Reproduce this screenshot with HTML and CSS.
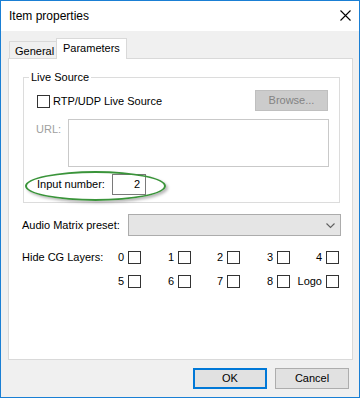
FILE: index.html
```html
<!DOCTYPE html>
<html>
<head>
<meta charset="utf-8">
<link rel="stylesheet" href="styles.css">
</head>
<body>
<div class="window">
  <div class="titlebar">
    <span class="title">Item properties</span>
    <svg class="close" width="11" height="11" viewBox="0 0 11 11"><path d="M0.5 0.5 L10.5 10.5 M10.5 0.5 L0.5 10.5" stroke="#000" stroke-width="1.1" fill="none"/></svg>
  </div>
  <div class="content">
    <div class="tabs">
      <div class="tab">General</div>
      <div class="tab active">Parameters</div>
    </div>
    <div class="panel">
      <div class="group">
        <div class="legend">Live Source</div>
        <div class="row row-live">
          <div class="check-wrap"><span class="checkbox"></span><span class="check-label">RTP/UDP Live Source</span></div>
          <div class="btn disabled">Browse...</div>
        </div>
        <div class="row row-url">
          <span class="url-label">URL:</span>
          <div class="textarea"></div>
        </div>
        <div class="row row-input">
          <span class="input-label">Input number:</span>
          <div class="numbox">2</div>
          <div class="highlight"></div>
        </div>
      </div>
      <div class="row row-audio">
        <span class="audio-label">Audio Matrix preset:</span>
        <div class="combo">
          <svg width="9" height="6" viewBox="0 0 9 6"><polyline points="0.5,0.5 4.5,4.5 8.5,0.5" stroke="#606060" stroke-width="1.1" fill="none"/></svg>
        </div>
      </div>
      <div class="row row-layers">
        <span class="layers-label">Hide CG Layers:</span>
        <div class="layer-grid">
          <div class="layer"><span>0</span><span class="checkbox"></span></div>
          <div class="layer"><span>1</span><span class="checkbox"></span></div>
          <div class="layer"><span>2</span><span class="checkbox"></span></div>
          <div class="layer"><span>3</span><span class="checkbox"></span></div>
          <div class="layer"><span>4</span><span class="checkbox"></span></div>
          <div class="layer"><span>5</span><span class="checkbox"></span></div>
          <div class="layer"><span>6</span><span class="checkbox"></span></div>
          <div class="layer"><span>7</span><span class="checkbox"></span></div>
          <div class="layer"><span>8</span><span class="checkbox"></span></div>
          <div class="layer"><span>Logo</span><span class="checkbox"></span></div>
        </div>
      </div>
    </div>
    <div class="footer">
      <div class="btn default">OK</div>
      <div class="btn">Cancel</div>
    </div>
  </div>
</div>
</body>
</html>
```

FILE: styles.css
```css
* { box-sizing: border-box; }
html, body { margin: 0; padding: 0; background: #ffffff; }
body {
  font-family: "Liberation Sans", Arial, sans-serif;
  font-size: 11px;
  color: #000;
}
.window {
  width: 360px;
  height: 398px;
  border: 1px solid #1a7fd4;
  background: #f0f0f0;
  display: flex;
  flex-direction: column;
}
.titlebar {
  height: 30px;
  flex: none;
  background: #ffffff;
  display: flex;
  align-items: center;
  justify-content: space-between;
  padding: 0 8px 0 8px;
}
.title {
  font-size: 12px;
  line-height: 14px;
}
.close { display: block; margin-top: -1px; }
.content {
  padding: 7px 6px 0 7px;
}
.tabs {
  display: flex;
  align-items: flex-end;
  height: 21px;
  margin: 0 0 -1px 1px;
}
.tab {
  height: 18px;
  width: 47px;
  border: 1px solid #d9d9d9;
  border-right: none;
  background: #f0f0f0;
  padding: 2px 0 0 5px;
  line-height: 14px;
  white-space: nowrap;
}
.tab.active {
  position: relative;
  height: 21px;
  width: 71px;
  border-right: 1px solid #d9d9d9;
  border-bottom: none;
  background: #ffffff;
  padding: 2px 0 0 6px;
}
.panel {
  width: 345px;
  height: 302px;
  background: #ffffff;
  border: 1px solid #d9d9d9;
}
.group {
  width: 317px;
  height: 126px;
  margin: 18px 0 0 14px;
  border: 1px solid #dcdcdc;
  padding-bottom: 7px;
}
.legend {
  width: fit-content;
  height: 13px;
  line-height: 13px;
  margin: -7px 0 0 5px;
  padding: 0 2px;
  background: #ffffff;
}
.row {
  display: flex;
  align-items: center;
}
.row-live {
  height: 21px;
  margin-top: 6px;
  justify-content: space-between;
  padding: 0 11px 0 13px;
}
.check-wrap { display: flex; align-items: center; margin-top: 1px; }
.checkbox {
  display: block;
  width: 13px;
  height: 13px;
  border: 1px solid #333333;
  background: #ffffff;
  flex: none;
}
.check-label { margin-left: 3px; line-height: 13px; white-space: nowrap; }
.btn {
  width: 74px;
  height: 21px;
  border: 1px solid #adadad;
  background: #e1e1e1;
  display: flex;
  align-items: center;
  justify-content: center;
  line-height: 13px;
}
.btn.disabled {
  width: 73px;
  background: #cccccc;
  border-color: #bfbfbf;
  color: #838383;
}
.btn.default {
  border: 2px solid #0078d7;
}
.row-url {
  margin-top: 8px;
  height: 48px;
  align-items: flex-start;
  padding-left: 12px;
}
.url-label {
  width: 32px;
  color: #a0a0a0;
  margin-top: 4px;
  line-height: 13px;
}
.textarea {
  width: 261px;
  height: 48px;
  border: 1px solid #c9c9c9;
  background: #ffffff;
}
.row-input {
  position: relative;
  margin-top: 7px;
  height: 21px;
  padding-left: 13px;
}
.input-label { width: 75px; line-height: 13px; white-space: nowrap; }
.numbox {
  width: 34px;
  height: 21px;
  border: 1px solid #7a7a7a;
  text-align: right;
  padding: 3px 5px 0 0;
  line-height: 13px;
}
.highlight {
  position: absolute;
  left: 1px;
  top: -3px;
  width: 141px;
  height: 30px;
  border: 2px solid #3a943a;
  border-radius: 50%;
  box-shadow: 2px 2px 3px rgba(0, 0, 0, 0.28);
}
.row-audio {
  margin-top: 11px;
  height: 22px;
  padding-left: 13px;
}
.audio-label { width: 106px; line-height: 13px; white-space: nowrap; }
.combo {
  width: 213px;
  height: 22px;
  background: #e5e5e5;
  border: 1px solid #acacac;
  display: flex;
  align-items: center;
  justify-content: flex-end;
  padding-right: 5px;
}
.combo svg { display: block; margin-top: 1px; }
.row-layers {
  margin-top: 15px;
  align-items: flex-start;
  padding-left: 13px;
}
.layers-label { width: 69px; flex: none; line-height: 13px; white-space: nowrap; }
.layer-grid {
  display: grid;
  grid-template-columns: 50px 50px 49px 50px 49px;
  row-gap: 11px;
}
.layer {
  display: flex;
  justify-content: flex-end;
  align-items: center;
  height: 13px;
  gap: 4px;
  line-height: 13px;
}
.footer {
  display: flex;
  justify-content: flex-end;
  gap: 8px;
  margin-top: 8px;
  padding-right: 4px;
}
```
